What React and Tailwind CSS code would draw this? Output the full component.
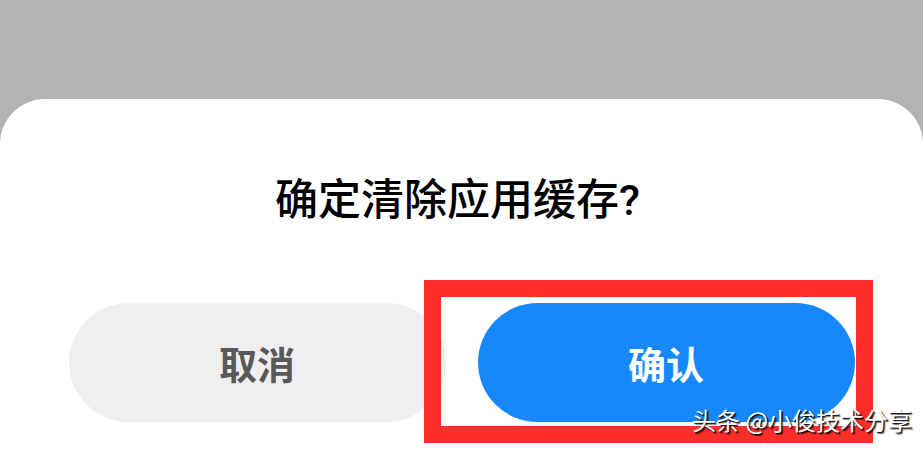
import React from 'react';

const cjk = { fontFamily: '"Noto Sans CJK SC", "Noto Sans", sans-serif' };

const App = () => {
  return (
    <div className="relative w-[923px] h-[449px] bg-[#b3b3b3] flex flex-col overflow-hidden" style={cjk}>
      <div className="h-[99px] shrink-0" />
      <div className="flex-1 bg-white rounded-t-[45px] flex flex-col items-center pt-[76px]">
        <h1 className="h-[43px] text-[43px] leading-[43px] font-medium text-black pr-[8px]">
          确定清除应用缓存<span className="font-['Roboto',sans-serif] font-medium">?</span>
        </h1>
        <div className="mt-[85px] flex gap-[32px]">
          <button className="w-[377px] h-[119px] rounded-full bg-[#efefef] text-[#595959] text-[38px] font-bold">
            取消
          </button>
          <button className="w-[377px] h-[119px] rounded-full bg-[#1688fc] text-white text-[38px] font-bold">
            确认
          </button>
        </div>
      </div>

      {/* highlight box drawn over the confirm button */}
      <div className="absolute left-[424px] top-[280px] w-[449px] h-[163px] border-[17px] border-[#fc2d2b] pointer-events-none" />

      <div className="absolute left-[692px] top-[405px] text-[24px] leading-[30px] text-white [text-shadow:1px_1px_1px_#000,2px_2px_1px_rgba(0,0,0,0.5)]">
        头条 @小俊技术分享
      </div>
    </div>
  );
};

export default App;
